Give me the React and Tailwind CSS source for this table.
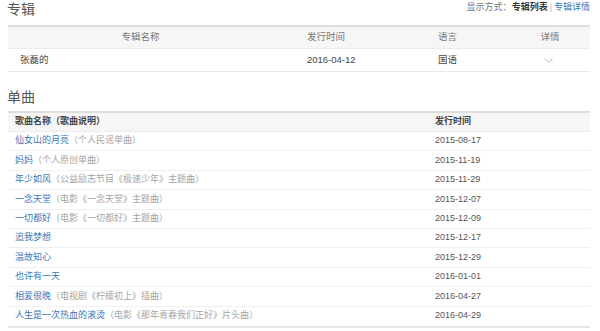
import React from 'react';

const songs = [
  { name: '仙女山的月亮', note: '（个人民谣单曲）', date: '2015-08-17' },
  { name: '妈妈', note: '（个人原创单曲）', date: '2015-11-19' },
  { name: '年少如风', note: '（公益励志节目《极速少年》主题曲）', date: '2015-11-29' },
  { name: '一念天堂', note: '（电影《一念天堂》主题曲）', date: '2015-12-07' },
  { name: '一切都好', note: '（电影《一切都好》主题曲）', date: '2015-12-09' },
  { name: '追我梦想', note: '', date: '2015-12-17' },
  { name: '温故知心', note: '', date: '2015-12-29' },
  { name: '也许有一天', note: '', date: '2016-01-01' },
  { name: '相爱很晚', note: '（电视剧《柠檬初上》插曲）', date: '2016-04-27' },
  { name: '人生是一次热血的滚烫', note: '（电影《那年青春我们正好》片头曲）', date: '2016-04-29' },
];

const Chevron = () => (
  <svg width="9" height="5" viewBox="0 0 9 5" className="inline-block">
    <path d="M0.5 0.5 L4.5 4 L8.5 0.5" fill="none" stroke="#b5b5b5" strokeWidth="1" />
  </svg>
);

export default function App() {
  return (
    <div className="w-[600px] h-[331px] bg-white overflow-hidden pl-2 pr-[10px] font-['Liberation_Sans','Noto_Sans_CJK_SC',sans-serif] text-[9px] text-[#555]">
      {/* 专辑 */}
      <div className="flex items-start justify-between h-[25px]">
        <h2 className="text-[14px] leading-[18px] text-[#555] -ml-[1px]">专辑</h2>
        <div className="text-[9px] leading-[12px] mt-[1px] text-[#777]">
          显示方式：<span className="font-bold text-[#333]">专辑列表</span>
          <span className="text-[#bbb] mx-[2px]">|</span>
          <span className="text-[#3a77b8]">专辑详情</span>
        </div>
      </div>

      <div className="border-t-2 border-[#dedede]">
        <div className="grid grid-cols-[287px_131px_84px_1fr] h-[22px] items-center bg-[#f6f6f6] border-b border-[#ececec] text-[#777] text-[9.5px]">
          <div className="text-center pr-[22px]">专辑名称</div>
          <div className="pl-3">发行时间</div>
          <div className="pl-3">语言</div>
          <div className="text-center">详情</div>
        </div>
        <div className="grid grid-cols-[287px_131px_84px_1fr] h-[23px] items-center border-b border-[#e8e8e8] text-[#444] text-[9.5px]">
          <div className="pl-3">张磊的</div>
          <div className="pl-3">2016-04-12</div>
          <div className="pl-3">国语</div>
          <div className="text-center pr-[3px] leading-none"><Chevron /></div>
        </div>
      </div>

      {/* 单曲 */}
      <h2 className="text-[14px] leading-[18px] text-[#555] -ml-[1px] mt-[16px] h-[23px]">单曲</h2>

      <div className="border-t-2 border-[#dedede] border-b-2 border-b-[#e6e6e6]">
        <div className="grid grid-cols-[420px_1fr] h-[19px] items-center bg-[#f6f6f6] border-b border-[#ececec] font-bold text-[#444]">
          <div className="pl-[7px]">歌曲名称（歌曲说明）</div>
          <div className="pl-[7px]">发行时间</div>
        </div>
        {songs.map((s, i) => (
          <div
            key={s.date}
            className={`grid grid-cols-[420px_1fr] h-[19.4px] items-center ${i < songs.length - 1 ? 'border-b border-[#f0f0f0]' : ''}`}
          >
            <div className="pl-[7px] whitespace-nowrap">
              <span className="text-[#3a77b8]">{s.name}</span>
              {s.note && <span className="text-[#a5a5a5]">{s.note}</span>}
            </div>
            <div className="pl-[7px] text-[#555]">{s.date}</div>
          </div>
        ))}
      </div>
    </div>
  );
}
